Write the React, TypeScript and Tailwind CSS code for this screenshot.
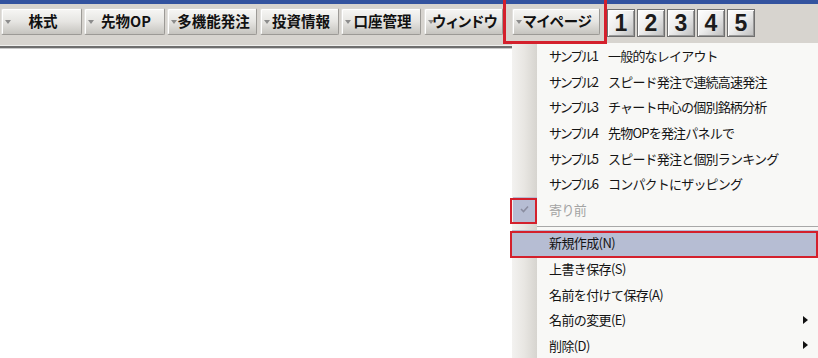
import React from "react";

const jp = { fontFamily: '"Noto Sans CJK JP", "Noto Sans", sans-serif' };

function Tri() {
  return (
    <svg width="6" height="4" viewBox="0 0 6 4" className="shrink-0">
      <path d="M0 0 L6 0 L3 4 Z" fill="#8c8c8c" />
    </svg>
  );
}

function ToolBtn({ label, w }: { label: string; w: string }) {
  return (
    <div
      className={`${w} h-[27px] flex items-center rounded-[2px] border border-[#9c9a96] border-t-[#d8d7d4] border-l-[#e2e1de] bg-linear-to-b from-[#f7f7f5] via-[#e6e5e2] to-[#c6c4bf] shadow-[inset_1px_1px_0_#ffffff]`}
    >
      <div className="w-[9px] shrink-0 pl-[3px] flex items-center">
        <Tri />
      </div>
      <div className="flex-1 min-w-0 flex justify-center whitespace-nowrap text-[14.5px] font-bold text-[#111] leading-none [font-feature-settings:'palt']">
        {label}
      </div>
      <div className="w-[6px] shrink-0" />
    </div>
  );
}

function NumBtn({ n }: { n: string }) {
  return (
    <div className="w-[28px] h-[28px] flex items-center justify-center border border-[#6f6f6f] bg-linear-to-br from-[#ffffff] via-[#ececec] to-[#bdbdbd] shadow-[inset_1px_1px_0_#ffffff,inset_-1px_-1px_0_#9a9a9a]">
      <span
        className="text-[23px] font-bold text-[#1c1c1c] leading-none"
        style={{ fontFamily: '"Liberation Sans", Arial, sans-serif' }}
      >
        {n}
      </span>
    </div>
  );
}

function Arrow() {
  return (
    <svg width="5" height="8" viewBox="0 0 5 8">
      <path d="M0 0 L5 4 L0 8 Z" fill="#111" />
    </svg>
  );
}

function Item({
  a,
  b,
  disabled,
  checked,
  hl,
  sub,
}: {
  a: string;
  b?: string;
  disabled?: boolean;
  checked?: boolean;
  hl?: boolean;
  sub?: boolean;
}) {
  return (
    <div className={`h-[25.75px] flex items-center ${hl ? "bg-[#b6bdd3]" : ""}`}>
      <div className="w-[25px] h-full flex items-center justify-center">
        {checked && (
          <div className="w-[24px] h-[25px] bg-[#b6bdd3] flex items-center justify-center">
            <svg width="9" height="8" viewBox="0 0 9 8">
              <path d="M1 4 L3.5 6.5 L8 1.5" stroke="#8a8da0" strokeWidth="1.6" fill="none" />
            </svg>
          </div>
        )}
      </div>
      <div
        className={`pl-[12px] flex-1 flex items-center whitespace-nowrap text-[13px] leading-none ${
          disabled ? "text-[#a3a3a3]" : "text-[#141414]"
        }`}
      >
        {b ? (
          <>
            <span className="w-[59px] tracking-[-2.2px]">{a}</span>
            <span className="tracking-[-0.8px]">{b}</span>
          </>
        ) : (
          <span className="tracking-[-0.6px]">{a}</span>
        )}
      </div>
      {sub && (
        <div className="w-[15px] flex items-center">
          <Arrow />
        </div>
      )}
    </div>
  );
}

export default function App() {
  return (
    <div className="relative w-[818px] h-[358px] bg-white overflow-hidden" style={jp}>
      <div className="h-[4px] bg-[#33539f]" />
      <div className="h-[41px] bg-[#d7d4cf] flex items-start pt-[4px] pl-[1px]">
        <ToolBtn label="株式" w="w-[81px]" />
        <div className="w-[2px]" />
        <ToolBtn label="先物OP" w="w-[81px]" />
        <div className="w-[2px]" />
        <ToolBtn label="多機能発注" w="w-[90px]" />
        <div className="w-[3px]" />
        <ToolBtn label="投資情報" w="w-[79px]" />
        <div className="w-[2px]" />
        <ToolBtn label="口座管理" w="w-[80px]" />
        <div className="w-[3px]" />
        <ToolBtn label="ウィンドウ" w="w-[79px]" />
        <div className="w-[9px]" />
        <ToolBtn label="マイページ" w="w-[88px]" />
        <div className="w-[7px]" />
        <div className="flex gap-[2px] mt-[1px]">
          <NumBtn n="1" />
          <NumBtn n="2" />
          <NumBtn n="3" />
          <NumBtn n="4" />
          <NumBtn n="5" />
        </div>
      </div>
      <div className="h-[1px] bg-[#efefed]" />
      <div className="h-[2px] bg-[#6e6e6e]" />
      <div className="h-[1px] bg-[#c9c9c9]" />

      {/* dropdown menu */}
      <div className="absolute left-[512px] top-[43px] w-[306px] h-[315px] bg-[#f8f8f6] flex">
        <div className="absolute left-0 top-0 w-[25px] h-full bg-linear-to-r from-[#f3f2f0] via-[#e8e6e2] to-[#d6d4cf]" />
        <div className="relative flex-1 flex flex-col">
          <Item a="サンプル1" b="一般的なレイアウト" />
          <Item a="サンプル2" b="スピード発注で連続高速発注" />
          <Item a="サンプル3" b="チャート中心の個別銘柄分析" />
          <Item a="サンプル4" b="先物OPを発注パネルで" />
          <Item a="サンプル5" b="スピード発注と個別ランキング" />
          <Item a="サンプル6" b="コンパクトにザッピング" />
          <Item a="寄り前" disabled checked />
          <div className="h-[8px] flex items-center pl-[25px]">
            <div className="flex-1 h-[1px] bg-[#a8a8a8]" />
          </div>
          <Item a="新規作成(N)" hl />
          <Item a="上書き保存(S)" />
          <Item a="名前を付けて保存(A)" />
          <Item a="名前の変更(E)" sub />
          <Item a="削除(D)" sub />
        </div>
      </div>

      {/* red annotation boxes */}
      <div className="absolute left-[503px] top-[-3px] w-[104px] h-[47px] border-[3px] border-[#d4202c]" />
      <div className="absolute left-[510px] top-[198px] w-[27px] h-[26px] border-2 border-[#d4202c]" />
      <div className="absolute left-[510px] top-[231px] w-[308px] h-[27px] border-2 border-[#d4202c]" />
    </div>
  );
}
